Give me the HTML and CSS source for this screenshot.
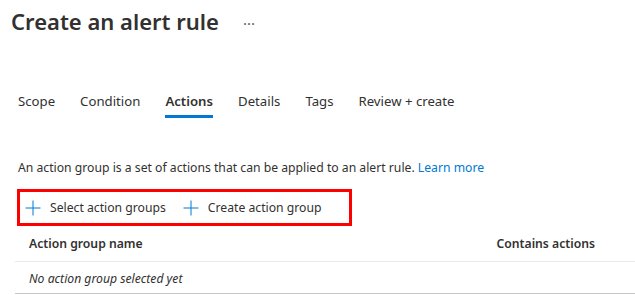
FILE: index.html
```html
<!DOCTYPE html>
<html lang="en">
<head>
    <meta charset="UTF-8">
    <meta name="viewport" content="width=device-width, initial-scale=1.0">
    <title>Create an alert rule</title>
    <link rel="stylesheet" href="styles.css">
</head>
<body>
    <div class="page">
        <div class="page-header">
            <h1>Create an alert rule</h1>
            <span class="more">···</span>
        </div>

        <nav class="tabs">
            <span class="tab">Scope</span>
            <span class="tab">Condition</span>
            <span class="tab active">Actions</span>
            <span class="tab">Details</span>
            <span class="tab">Tags</span>
            <span class="tab">Review + create</span>
        </nav>

        <p class="intro">An action group is a set of actions that can be applied to an alert rule. <a href="#">Learn more</a></p>

        <div class="toolbar">
            <button class="cmd">
                <svg width="16" height="16" viewBox="0 0 16 16"><path d="M8 0.5V15.5M0.5 8H15.5" stroke="#0078d4" stroke-width="1" fill="none"/></svg>
                Select action groups
            </button>
            <button class="cmd">
                <svg width="16" height="16" viewBox="0 0 16 16"><path d="M8 0.5V15.5M0.5 8H15.5" stroke="#0078d4" stroke-width="1" fill="none"/></svg>
                Create action group
            </button>
        </div>

        <div class="grid">
            <div class="grid-head">
                <span class="col-name">Action group name</span>
                <span class="col-actions">Contains actions</span>
            </div>
            <div class="grid-row empty">No action group selected yet</div>
        </div>
    </div>
</body>
</html>
```

FILE: styles.css
```css
body {
    margin: 0;
    background: #fff;
    font-family: "Segoe UI", "Noto Sans", "Open Sans", sans-serif;
    color: #323130;
    font-size: 12.2px;
}
.page {
    padding: 0;
}
.page-header {
    display: flex;
    align-items: center;
    height: 42px;
    padding-left: 11px;
}
.page-header h1 {
    margin: 0;
    font-size: 22px;
    font-weight: 600;
    color: #323130;
}
.more {
    margin: 4px 0 0 24px;
    font-size: 15px;
    color: #605e5c;
}
.tabs {
    display: flex;
    gap: 25px;
    margin-top: 43px;
    padding-left: 18px;
    font-size: 13.2px;
}
.tab {
    height: 33px;
    line-height: 32px;
    border-bottom: 3px solid transparent;
    box-sizing: border-box;
}
.tab.active {
    font-weight: 600;
    border-bottom-color: #0078d4;
}
.intro {
    margin: 41px 0 0 18px;
    line-height: 18px;
}
.intro a {
    color: #0078d4;
    text-decoration: none;
}
.toolbar {
    display: flex;
    gap: 17px;
    width: 335px;
    height: 37px;
    margin: 12px 0 0 17px;
    padding-left: 5px;
    border: 3px solid #f00;
    box-sizing: border-box;
}
.cmd {
    display: flex;
    align-items: center;
    gap: 9px;
    padding: 0;
    border: none;
    background: none;
    font: inherit;
    color: #323130;
}
.grid {
    margin-left: 15px;
}
.grid-head {
    display: flex;
    justify-content: space-between;
    height: 35px;
    line-height: 36px;
    padding: 0 40px 0 14px;
    font-weight: 600;
    border-bottom: 1px solid #edebe9;
}
.grid-row {
    height: 31px;
    line-height: 33px;
    padding-left: 14px;
    border-bottom: 1px solid #c8c6c4;
}
.empty {
    font-style: italic;
}
```
